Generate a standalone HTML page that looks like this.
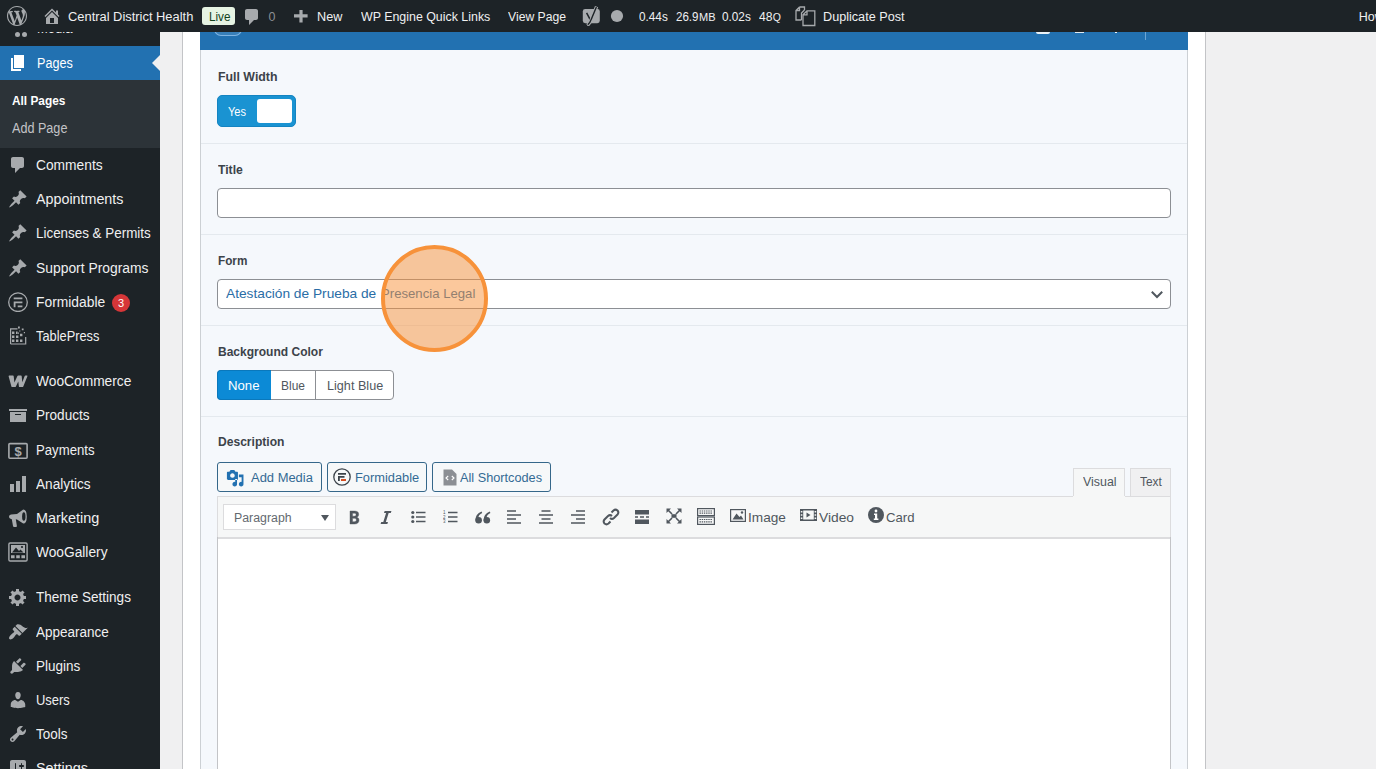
<!DOCTYPE html>
<html><head><meta charset="utf-8"><style>
html,body{margin:0;padding:0;width:1376px;height:769px;overflow:hidden;background:#f0f0f1;}
body{position:relative;font-family:"Liberation Sans",sans-serif;}
.r{position:absolute;}
.t{position:absolute;white-space:nowrap;line-height:20px;transform-origin:0 0;}
</style></head><body>
<div class="r" style="left:160px;top:32px;width:1216px;height:737px;background:#f0f0f1"></div>
<div class="r" style="left:182px;top:32px;width:1024px;height:737px;background:#fff;border-left:1px solid #c3c4c7;border-right:1px solid #c3c4c7;box-sizing:border-box"></div>
<div class="r" style="left:200px;top:32px;width:988px;height:737px;background:#f5f8fc;border-left:1px solid #ccd0d4;border-right:1px solid #ccd0d4;box-sizing:border-box"></div>
<div class="r" style="left:200px;top:32px;width:988px;height:18px;background:#2271b1"></div>
<div class="r" style="left:214px;top:22px;width:28px;height:14px;border:1.2px solid rgba(140,190,235,.85);border-radius:8px;background:rgba(255,255,255,.1);box-sizing:border-box"></div>
<div class="r" style="left:1036px;top:32px;width:14px;height:1.6000000000000014px;background:rgba(255,255,255,.9);border-radius:0 0 2px 2px"></div>
<div class="r" style="left:1075px;top:32px;width:8.5px;height:1.2000000000000028px;background:rgba(255,255,255,.85)"></div>
<div class="r" style="left:1115px;top:32px;width:2px;height:1.3999999999999986px;background:rgba(255,255,255,.9)"></div>
<div class="r" style="left:1145px;top:32px;width:1px;height:8px;background:rgba(160,200,235,.6)"></div>
<div class="r" style="left:201px;top:143px;width:986px;height:1px;background:#e4e9ee"></div>
<div class="r" style="left:201px;top:234px;width:986px;height:1px;background:#e4e9ee"></div>
<div class="r" style="left:201px;top:325px;width:986px;height:1px;background:#e4e9ee"></div>
<div class="r" style="left:201px;top:416px;width:986px;height:1px;background:#e4e9ee"></div>
<div class="r" style="left:0px;top:32px;width:160px;height:737px;background:#1d2327"></div>
<div class="r" style="left:0px;top:46px;width:160px;height:34px;background:#2271b1"></div>
<div class="r" style="left:0px;top:80px;width:160px;height:68px;background:#2c3338"></div>
<div class="r" style="left:152px;top:55px;width:0;height:0;border-top:8px solid transparent;border-bottom:8px solid transparent;border-right:8px solid #f0f0f1"></div>
<div class="r" style="left:0px;top:0px;width:1376px;height:32px;background:#1d2327"></div>
<svg class="r" style="left:7px;top:6px;" width="20" height="20" viewBox="0 0 20 20"><path fill-rule="evenodd" d="M20 10c0-5.51-4.49-10-10-10C4.48 0 0 4.49 0 10c0 5.52 4.48 10 10 10 5.51 0 10-4.48 10-10zM7.78 15.37L4.37 6.22c.55-.02 1.17-.08 1.17-.08.5-.06.44-1.13-.06-1.11 0 0-1.45.11-2.37.11-.18 0-.37 0-.58-.01C4.120 2.690 6.870 1.110 10 1.110c2.33 0 4.45.87 6.05 2.34-.68-.11-1.65.39-1.650 1.580 0 .74.45 1.36.9 2.1.35.61.55 1.36.55 2.46 0 1.49-1.4 5-1.4 5l-3.03-8.37c.54-.02.82-.17.82-.17.5-.05.44-1.25-.06-1.22 0 0-1.44.12-2.38.12-.87 0-2.33-.12-2.33-.12-.5-.03-.56 1.2-.06 1.22l.92.08 1.26 3.41zM17.41 10c.24-.64.74-1.870.43-4.250.7 1.290 1.050 2.710 1.050 4.250 0 3.29-1.73 6.24-4.4 7.78.97-2.59 1.94-5.2 2.92-7.78zM6.1 18.09C3.12 16.65 1.11 13.53 1.11 10c0-1.3.23-2.48.72-3.59C3.25 10.3 4.67 14.2 6.1 18.090zm4.03-6.63l2.58 6.98c-.86.29-1.76.45-2.71.45-.79 0-1.57-.11-2.29-.33.81-2.38 1.62-4.74 2.42-7.1z" fill="#a7aaad"/></svg>
<svg class="r" style="left:42px;top:6px;" width="20" height="20" viewBox="0 0 20 20"><path d="M16 8.5l1.53 1.53-1.06 1.06L10 4.62l-6.47 6.47-1.06-1.06L10 2.5l4 4v-2h2v4zm-6-2.46l6 5.99V18H4v-5.97zM12 17v-5H8v5h4z" fill="#a7aaad"/></svg>
<div class="t" style="left:68.00px;top:6.67px;font-size:12.5px;color:#f0f0f1;transform:scaleX(1.0308);">Central District Health</div>
<div class="r" style="left:202px;top:7px;width:33px;height:18px;background:#e6f3e3;border-radius:3px"></div>
<div class="t" style="left:208.50px;top:6.67px;font-size:12.5px;color:#12421c;transform:scaleX(0.9376);">Live</div>
<svg class="r" style="left:242px;top:7px;" width="20" height="20" viewBox="0 0 20 20"><path d="M5 2h9c1.1 0 2 .9 2 2v7c0 1.1-.9 2-2 2h-2l-5 5v-5H5c-1.1 0-2-.9-2-2V4c0-1.1.9-2 2-2z" fill="#a7aaad"/></svg>
<div class="t" style="left:268.40px;top:6.67px;font-size:12.5px;color:#8c8f94;transform:scaleX(1.0000);">0</div>
<svg class="r" style="left:293px;top:9px;" width="16" height="15" viewBox="0 0 16 15"><path d="M6.4 1 H9.6 V5.2 H14.6 V8.4 H9.6 V13.6 H6.4 V8.4 H1 V5.2 H6.4 Z" fill="#a7aaad"/></svg>
<div class="t" style="left:316.70px;top:6.67px;font-size:12.5px;color:#f0f0f1;transform:scaleX(1.0117);">New</div>
<div class="t" style="left:360.80px;top:6.67px;font-size:12.5px;color:#f0f0f1;transform:scaleX(0.9917);">WP Engine Quick Links</div>
<div class="t" style="left:507.90px;top:6.67px;font-size:12.5px;color:#f0f0f1;transform:scaleX(0.9759);">View Page</div>
<svg class="r" style="left:582px;top:6px;" width="18" height="20" viewBox="0 0 18 20"><rect x="0.8" y="3" width="17" height="14.2" rx="2.4" fill="#a7aaad"/><path d="M4.6 6.8 Q6.6 10.5 8.2 13.6" stroke="#1d2327" stroke-width="1.5" fill="none"/><path d="M14.6 0.6 L9.4 13.2 Q8 17.6 5.2 19.4" stroke="#a7aaad" stroke-width="3.4" fill="none"/><path d="M14.4 1 L9.2 13.4 Q8 17 5.8 18.8" stroke="#1d2327" stroke-width="1.4" fill="none"/></svg>
<svg class="r" style="left:610px;top:9px;" width="14" height="14" viewBox="0 0 14 14"><circle cx="7" cy="7" r="6.1" fill="#a7aaad"/></svg>
<div class="t" style="left:638.80px;top:6.67px;font-size:12.5px;color:#f0f0f1;transform:scaleX(0.9419);">0.44s</div>
<div class="t" style="left:675.50px;top:6.67px;font-size:12.5px;color:#f0f0f1;transform:scaleX(0.9249);">26.9</div>
<div class="t" style="left:698.50px;top:7.54px;font-size:10px;color:#f0f0f1;transform:scaleX(1.0999);">MB</div>
<div class="t" style="left:722.40px;top:6.67px;font-size:12.5px;color:#f0f0f1;transform:scaleX(0.9419);">0.02s</div>
<div class="t" style="left:758.90px;top:6.67px;font-size:12.5px;color:#f0f0f1;transform:scaleX(0.9710);">48</div>
<div class="t" style="left:772.80px;top:7.36px;font-size:10.5px;color:#f0f0f1;transform:scaleX(1.0000);">Q</div>
<svg class="r" style="left:795px;top:6px;" width="22" height="21" viewBox="0 0 22 21"><path d="M4.5 1 H9.5 V4 M4.5 1 L1 4.5 V14 H6.5 M1 4.5 H4.5 V1" fill="none" stroke="#a7aaad" stroke-width="1.3"/><path d="M12 4.8 H19.8 V19.5 H8 V8.8 Z M8 8.8 H12 V4.8" fill="none" stroke="#a7aaad" stroke-width="1.3"/><path d="M9.5 4 L6.5 7 V14" fill="none" stroke="#a7aaad" stroke-width="1.3"/></svg>
<div class="t" style="left:822.50px;top:6.67px;font-size:12.5px;color:#f0f0f1;transform:scaleX(1.0112);">Duplicate Post</div>
<div class="t" style="left:1358.80px;top:6.67px;font-size:12.5px;color:#f0f0f1;transform:scaleX(1.0000);">Howdy, Admin</div>
<div class="r" style="left:0;top:32px;width:160px;height:8px;overflow:hidden">
<svg class="r" style="left:8px;top:-14px;" width="20" height="20" viewBox="0 0 20 20"><circle cx="9.5" cy="16.5" r="2.5" fill="#a7aaad"/><circle cx="16.5" cy="16.5" r="2.5" fill="#a7aaad"/></svg>
</div>
<div class="r" style="left:36px;top:32px;width:60px;height:1.6px;overflow:hidden"><div class="t" style="left:0.5px;top:-14px;font-size:14px;color:#f0f0f1;transform:scaleX(0.93)">Media</div></div>
<svg class="r" style="left:8px;top:53px;" width="20" height="20" viewBox="0 0 20 20"><path d="M6 15V2h10v13H6zm-1 1h8v2H3V5h2v11z" fill="#fff"/></svg>
<div class="t" style="left:36.50px;top:53.15px;font-size:14px;color:#fff;transform:scaleX(0.8993);">Pages</div>
<div class="t" style="left:11.90px;top:90.97px;font-size:12.5px;color:#fff;transform:scaleX(0.9490);font-weight:bold;">All Pages</div>
<div class="t" style="left:12.00px;top:118.15px;font-size:14px;color:#c3c4c7;transform:scaleX(0.9009);">Add Page</div>
<div class="t" style="left:36.30px;top:155.35px;font-size:14px;color:#f0f0f1;transform:scaleX(0.9840);">Comments</div>
<div class="t" style="left:36.30px;top:189.35px;font-size:14px;color:#f0f0f1;transform:scaleX(1.0210);">Appointments</div>
<div class="t" style="left:36.30px;top:223.35px;font-size:14px;color:#f0f0f1;transform:scaleX(0.9573);">Licenses &amp; Permits</div>
<div class="t" style="left:36.30px;top:257.85px;font-size:14px;color:#f0f0f1;transform:scaleX(0.9902);">Support Programs</div>
<div class="t" style="left:36.30px;top:291.95px;font-size:14px;color:#f0f0f1;transform:scaleX(0.9882);">Formidable</div>
<div class="t" style="left:36.30px;top:325.95px;font-size:14px;color:#f0f0f1;transform:scaleX(0.9155);">TablePress</div>
<div class="t" style="left:36.30px;top:371.35px;font-size:14px;color:#f0f0f1;transform:scaleX(0.9836);">WooCommerce</div>
<div class="t" style="left:36.30px;top:405.45px;font-size:14px;color:#f0f0f1;transform:scaleX(0.9684);">Products</div>
<div class="t" style="left:36.30px;top:439.85px;font-size:14px;color:#f0f0f1;transform:scaleX(0.9398);">Payments</div>
<div class="t" style="left:36.30px;top:474.15px;font-size:14px;color:#f0f0f1;transform:scaleX(0.9746);">Analytics</div>
<div class="t" style="left:36.30px;top:508.45px;font-size:14px;color:#f0f0f1;transform:scaleX(1.0298);">Marketing</div>
<div class="t" style="left:36.30px;top:542.45px;font-size:14px;color:#f0f0f1;transform:scaleX(0.9811);">WooGallery</div>
<div class="t" style="left:36.30px;top:587.45px;font-size:14px;color:#f0f0f1;transform:scaleX(0.9679);">Theme Settings</div>
<div class="t" style="left:36.30px;top:621.85px;font-size:14px;color:#f0f0f1;transform:scaleX(0.9642);">Appearance</div>
<div class="t" style="left:36.30px;top:656.05px;font-size:14px;color:#f0f0f1;transform:scaleX(0.9626);">Plugins</div>
<div class="t" style="left:36.30px;top:690.05px;font-size:14px;color:#f0f0f1;transform:scaleX(0.9245);">Users</div>
<div class="t" style="left:36.30px;top:724.15px;font-size:14px;color:#f0f0f1;transform:scaleX(0.9608);">Tools</div>
<div class="t" style="left:36.30px;top:758.25px;font-size:14px;color:#f0f0f1;transform:scaleX(1.0280);">Settings</div>
<div class="r" style="left:112px;top:294px;width:18px;height:18px;border-radius:9px;background:#d63638"></div>
<div class="t" style="left:118.00px;top:293.19px;font-size:11px;color:#fff;transform:scaleX(1.0000);">3</div>
<svg class="r" style="left:8px;top:155.1px;" width="20" height="20" viewBox="0 0 20 20"><path d="M5 2h9c1.1 0 2 .9 2 2v7c0 1.1-.9 2-2 2h-2l-5 5v-5H5c-1.1 0-2-.9-2-2V4c0-1.1.9-2 2-2z" fill="#a7aaad"/></svg>
<svg class="r" style="left:8px;top:189.1px;" width="20" height="20" viewBox="0 0 20 20"><path d="M10.44 3.02l1.82-1.82 6.36 6.35-1.83 1.82c-1.05-.68-2.48-.57-3.41.36l-.75.75c-.92.93-1.04 2.35-.35 3.41l-1.83 1.82-2.41-2.41-2.8 2.79c-.42.42-3.38 2.71-3.8 2.29s1.86-3.39 2.28-3.81l2.79-2.79L4.1 9.36l1.83-1.82c1.05.69 2.48.57 3.4-.36l.75-.75c.93-.92 1.05-2.35.36-3.41z" fill="#a7aaad"/></svg>
<svg class="r" style="left:8px;top:223.1px;" width="20" height="20" viewBox="0 0 20 20"><path d="M10.44 3.02l1.82-1.82 6.36 6.35-1.83 1.82c-1.05-.68-2.48-.57-3.41.36l-.75.75c-.92.93-1.04 2.35-.35 3.41l-1.83 1.82-2.41-2.41-2.8 2.79c-.42.42-3.38 2.71-3.8 2.29s1.86-3.39 2.28-3.81l2.79-2.79L4.1 9.36l1.83-1.82c1.05.69 2.48.57 3.4-.36l.75-.75c.93-.92 1.05-2.35.36-3.41z" fill="#a7aaad"/></svg>
<svg class="r" style="left:8px;top:257.6px;" width="20" height="20" viewBox="0 0 20 20"><path d="M10.44 3.02l1.82-1.82 6.36 6.35-1.83 1.82c-1.05-.68-2.48-.57-3.41.36l-.75.75c-.92.93-1.04 2.35-.35 3.41l-1.83 1.82-2.41-2.41-2.8 2.79c-.42.42-3.38 2.71-3.8 2.29s1.86-3.39 2.28-3.81l2.79-2.79L4.1 9.36l1.83-1.82c1.05.69 2.48.57 3.4-.36l.75-.75c.93-.92 1.05-2.35.36-3.41z" fill="#a7aaad"/></svg>
<svg class="r" style="left:8px;top:291.7px;" width="20" height="20" viewBox="0 0 20 20"><circle cx="10" cy="10.2" r="9.3" fill="none" stroke="#a7aaad" stroke-width="1.3"/><path d="M5.7 5.5 H14.4 V7.3 H5.7 Z M5.7 9.5 H14.4 V11.3 H7.5 V15.3 H5.7 Z M9.7 13.4 H14.4 V15.2 H9.7 Z" fill="#a7aaad"/></svg>
<svg class="r" style="left:8px;top:325.7px;" width="20" height="20" viewBox="0 0 20 20"><path d="M2.6 18 V2.9 H9.5 M2.6 18 H17.7 V11" fill="none" stroke="#a7aaad" stroke-width="1.2"/><path d="M4 5.6h2.4v2.4h-2.4z M4 9.6h2.4v2.4h-2.4z M4 13.6h2.4v2.4h-2.4z M8 9.6h2.4v2.4h-2.4z M8 13.6h2.4v2.4h-2.4z M12 13.6h2.4v2.4h-2.4z M8 5.6h1.6v2.4h-1.6z M12 7.8h2.4v2.4h-2.4z" fill="#a7aaad"/><path d="M10 0.6h1.8v1.8h-1.8z M13.8 2.4h1.8v1.8h-1.8z M11.2 4.4h1.2v1.2h-1.2z M15.8 6h1.2v1.2h-1.2z M9.8 6.6h1.2v1.2h-1.2z" fill="#a7aaad"/></svg>
<svg class="r" style="left:8px;top:371.1px;" width="20" height="20" viewBox="0 0 20 20"><path d="M0.6 5.2 Q0.6 4.6 1.3 4.6 H5 Q5.6 4.6 5.7 5.3 L6.4 11.4 L9.3 5.2 Q9.6 4.6 10.2 4.6 H13 Q13.6 4.6 13.7 5.3 L14.3 11.2 L16.6 5.2 Q16.9 4.6 17.5 4.6 H19 Q19.7 4.6 19.4 5.3 L15.3 15.4 Q15 16 14.4 16 H11.6 Q11 16 10.9 15.4 L10.3 10.6 L7.9 15.4 Q7.6 16 7 16 H4.2 Q3.6 16 3.4 15.4 Z" fill="#a7aaad"/></svg>
<svg class="r" style="left:8px;top:405.2px;" width="20" height="20" viewBox="0 0 20 20"><path d="M19 4v2H1V4h18zM2 7h16v10H2V7zm11 3V9H7v1h6z" fill="#a7aaad"/></svg>
<svg class="r" style="left:8px;top:439.6px;" width="20" height="20" viewBox="0 0 20 20"><rect x="0.9" y="3.6" width="18.2" height="14.6" rx="1" fill="none" stroke="#a7aaad" stroke-width="1.6"/><text x="10" y="15.6" font-family="Liberation Sans" font-weight="bold" font-size="13" text-anchor="middle" fill="#a7aaad">$</text></svg>
<svg class="r" style="left:8px;top:473.9px;" width="20" height="20" viewBox="0 0 20 20"><path d="M18 18V2h-4v16h4zm-6 0V7H8v11h4zm-6 0v-8H2v8h4z" fill="#a7aaad"/></svg>
<svg class="r" style="left:8px;top:508.2px;" width="20" height="20" viewBox="0 0 20 20"><path d="M1 8.6 Q1 6.6 3 6.4 L9 6 L15.2 1.4 Q18.8 1.4 18.8 8.4 Q18.8 15.6 15.2 15.6 L9 11.4 L7.8 11.3 L8.9 18 Q9 19 8 19 H6 Q5.2 19 5 18 L3.8 11.2 Q1 11 1 8.6 Z" fill="#a7aaad"/><ellipse cx="15.8" cy="8.5" rx="1.7" ry="4.3" fill="#1d2327"/></svg>
<svg class="r" style="left:8px;top:542.2px;" width="20" height="20" viewBox="0 0 20 20"><rect x="0.9" y="1" width="18.2" height="18" rx="1.2" fill="none" stroke="#a7aaad" stroke-width="1.4"/><path d="M3 3 H17 V11 H3 Z" fill="#a7aaad"/><path d="M4 10.5 L8 5.5 L11 9 L12.5 7.5 L15.5 10.5 Z" fill="#1d2327"/><circle cx="14" cy="5" r="1.1" fill="#1d2327"/><path d="M3 13.2h3.6v3h-3.6z M8.2 13.2h3.6v3h-3.6z M13.4 13.2h3.6v3h-3.6z" fill="#a7aaad"/></svg>
<svg class="r" style="left:8px;top:587.2px;" width="20" height="20" viewBox="0 0 20 20"><path d="M18 12h-2.18c-.17.7-.44 1.35-.81 1.93l1.54 1.54-2.1 2.1-1.54-1.54c-.58.36-1.23.63-1.91.79V19H8v-2.18c-.68-.16-1.33-.43-1.91-.79l-1.54 1.54-2.12-2.12 1.54-1.54c-.36-.58-.63-1.23-.79-1.91H1V9.03h2.17c.16-.7.44-1.35.8-1.94L2.43 5.55l2.1-2.1 1.54 1.54c.58-.37 1.24-.64 1.93-.81V2h3v2.18c.68.16 1.33.43 1.910.79l1.54-1.54 2.12 2.12-1.54 1.54c.36.59.64 1.24.8 1.94H18V12zm-8.5 1.5c1.66 0 3-1.34 3-3s-1.34-3-3-3-3 1.34-3 3 1.34 3 3 3z" fill="#a7aaad"/></svg>
<svg class="r" style="left:8px;top:621.6px;" width="20" height="20" viewBox="0 0 20 20"><path d="M14.48 11.06L7.41 3.99l1.5-1.5c.5-.56 2.3-.47 3.51.32 1.21.8 1.43 1.28 2.91 2.1 1.18.64 2.45 1.26 4.45.85zm-.71.71L6.7 4.7 4.93 6.47c-.39.39-.39 1.02 0 1.41l1.06 1.06c.39.39.39 1.03 0 1.42-.6.6-1.43 1.11-2.21 1.69-.35.26-.7.53-1.01.84C1.43 14.23.4 16.08 1.4 17.07c.99 1 2.84-.03 4.18-1.36.31-.31.58-.66.85-1.020.57-.78 1.08-1.61 1.69-2.21.39-.39 1.02-.39 1.41 0l1.06 1.06c.39.39 1.02.39 1.41 0z" fill="#a7aaad"/></svg>
<svg class="r" style="left:8px;top:655.8px;" width="20" height="20" viewBox="0 0 20 20"><path d="M13.11 4.36L9.87 7.6 8 5.73l3.24-3.24c.35-.34 1.05-.2 1.56.32.52.51.66 1.21.31 1.55zm-8 1.77l.91-1.12 9.01 9.01-1.19.84c-.71.71-2.63 1.16-3.82 1.16H6.14L4.9 17.26c-.59.59-1.54.59-2.12 0-.59-.58-.59-1.53 0-2.12l1.24-1.24v-3.88c0-1.13.4-3.19 1.09-3.89zm7.26 3.97l3.24-3.24c.34-.35 1.04-.21 1.55.31.52.51.66 1.21.31 1.55l-3.24 3.25z" fill="#a7aaad"/></svg>
<svg class="r" style="left:8px;top:689.8px;" width="20" height="20" viewBox="0 0 20 20"><path d="M10 9.25c-2.27 0-2.73-3.44-2.73-3.44C7 4.02 7.82 2 9.97 2c2.16 0 2.98 2.02 2.71 3.81 0 0-.41 3.44-2.68 3.44zm0 2.57L12.72 10c2.39 0 4.52 2.33 4.52 4.53v2.49s-3.65 1.13-7.24 1.13c-3.65 0-7.24-1.13-7.24-1.13v-2.49c0-2.25 1.94-4.48 4.47-4.48z" fill="#a7aaad"/></svg>
<svg class="r" style="left:8px;top:723.9px;" width="20" height="20" viewBox="0 0 20 20"><path d="M16.68 9.77c-1.34 1.34-3.3 1.67-4.95.99l-5.41 6.52c-.99.99-2.59.99-3.58 0s-.99-2.59 0-3.57l6.52-5.42c-.68-1.65-.35-3.61.99-4.95 1.28-1.28 3.12-1.62 4.72-1.06l-2.89 2.89 2.82 2.82 2.86-2.87c.53 1.58.18 3.39-1.08 4.65zM3.81 16.21c.4.39 1.04.39 1.43 0 .4-.4.4-1.04 0-1.43-.39-.4-1.03-.4-1.43 0-.39.39-.39 1.03 0 1.43z" fill="#a7aaad"/></svg>
<svg class="r" style="left:8px;top:758.0px;" width="20" height="20" viewBox="0 0 20 20"><path d="M18 16V4c0-1.1-.9-2-2-2H4c-1.1 0-2 .9-2 2v12c0 1.1.9 2 2 2h12c1.1 0 2-.9 2-2zM8 11h1c.55 0 1 .45 1 1s-.45 1-1 1H8v1.5c0 .28-.22.5-.5.5s-.5-.22-.5-.5V13H6c-.55 0-1-.45-1-1s.45-1 1-1h1V5.5c0-.28.22-.5.5-.5s.5.22.5.5V11zm5-2h-1c-.55 0-1-.45-1-1s.45-1 1-1h1V5.5c0-.28.22-.5.5-.5s.5.22.5.5V7h1c.55 0 1 .45 1 1s-.45 1-1 1h-1v5.5c0 .28-.22.5-.5.5s-.5-.22-.5-.5V9z" fill="#a7aaad"/></svg>
<div class="t" style="left:217.70px;top:66.54px;font-size:12px;color:#3c434a;transform:scaleX(1.0280);font-weight:bold;">Full Width</div>
<div class="r" style="left:217px;top:95px;width:79px;height:32px;background:#1a93d2;border:1px solid #1484c2;border-radius:5px;box-sizing:border-box"></div>
<div class="r" style="left:257px;top:99px;width:35px;height:24px;background:#fff;border-radius:3px"></div>
<div class="t" style="left:228.20px;top:101.64px;font-size:12px;color:#fff;transform:scaleX(0.9195);">Yes</div>
<div class="t" style="left:217.70px;top:159.84px;font-size:12px;color:#3c434a;transform:scaleX(1.0142);font-weight:bold;">Title</div>
<div class="r" style="left:217px;top:188px;width:954px;height:30px;background:#fff;border:1px solid #8c8f94;border-radius:4px;box-sizing:border-box"></div>
<div class="t" style="left:217.80px;top:250.64px;font-size:12px;color:#3c434a;transform:scaleX(0.9799);font-weight:bold;">Form</div>
<div class="r" style="left:217px;top:279px;width:954px;height:30px;background:#fff;border:1px solid #8c8f94;border-radius:4px;box-sizing:border-box"></div>
<div class="t" style="left:226.30px;top:284.00px;font-size:13px;color:#2a6da6;transform:scaleX(1.0550);">Atestación de Prueba de</div>
<div class="t" style="left:380.60px;top:284.00px;font-size:13px;color:#2a6da6;transform:scaleX(1.0115);">Presencia Legal</div>
<svg class="r" style="left:1150px;top:290px;" width="14" height="9" viewBox="0 0 14 9"><path d="M1.8 1.8 L7 7 L12.2 1.8" fill="none" stroke="#50575e" stroke-width="2"/></svg>
<div class="t" style="left:217.80px;top:341.94px;font-size:12px;color:#3c434a;transform:scaleX(1.0021);font-weight:bold;">Background Color</div>
<div class="r" style="left:217px;top:370px;width:177px;height:30px;background:#fff;border:1px solid #8c8f94;border-radius:4px;box-sizing:border-box"></div>
<div class="r" style="left:217px;top:370px;width:54px;height:30px;background:#0c8ad6;border:1px solid #0a78bc;border-right:none;border-radius:4px 0 0 4px;box-sizing:border-box"></div>
<div class="r" style="left:315px;top:371px;width:1px;height:28px;background:#8c8f94"></div>
<div class="t" style="left:227.80px;top:375.84px;font-size:12px;color:#fff;transform:scaleX(1.0980);">None</div>
<div class="t" style="left:281.30px;top:375.84px;font-size:12px;color:#50575e;transform:scaleX(0.9992);">Blue</div>
<div class="t" style="left:326.80px;top:375.84px;font-size:12px;color:#50575e;transform:scaleX(1.0529);">Light Blue</div>
<div class="t" style="left:217.70px;top:432.44px;font-size:12px;color:#3c434a;transform:scaleX(1.0058);font-weight:bold;">Description</div>
<div class="r" style="left:217px;top:462px;width:105px;height:30px;background:#f6f8f9;border:1px solid #35678a;border-radius:3px;box-sizing:border-box"></div>
<div class="r" style="left:327px;top:462px;width:100px;height:30px;background:#f6f8f9;border:1px solid #35678a;border-radius:3px;box-sizing:border-box"></div>
<div class="r" style="left:432px;top:462px;width:119px;height:30px;background:#f6f8f9;border:1px solid #35678a;border-radius:3px;box-sizing:border-box"></div>
<div class="t" style="left:251.40px;top:467.57px;font-size:12.5px;color:#336a94;transform:scaleX(1.0358);">Add Media</div>
<div class="t" style="left:354.90px;top:467.57px;font-size:12.5px;color:#336a94;transform:scaleX(1.0268);">Formidable</div>
<div class="t" style="left:460.40px;top:467.57px;font-size:12.5px;color:#336a94;transform:scaleX(1.0174);">All Shortcodes</div>
<svg class="r" style="left:226px;top:468.6px;" width="18.4" height="18.4" viewBox="0 0 20 20"><path d="M13 11V4c0-.55-.45-1-1-1h-1.67L9 1H5L3.67 3H2c-.55 0-1 .45-1 1v7c0 .55.45 1 1 1h10c.55 0 1-.45 1-1zM7 4.5c1.38 0 2.5 1.12 2.5 2.5S8.38 9.5 7 9.5 4.5 8.38 4.5 7 5.62 4.5 7 4.5zM14 6h5v10.5c0 1.38-1.12 2.5-2.5 2.5S14 17.88 14 16.5s1.12-2.5 2.5-2.5c.17 0 .34.02.5.05V9h-3V6zm-4 8.050V11h2v5.5c0 1.38-1.12 2.5-2.5 2.5S7 17.88 7 16.5 8.12 14 9.5 14c.17 0 .34.02.5.05z" fill="#2271b1"/></svg>
<svg class="r" style="left:333px;top:468px;" width="18" height="18" viewBox="0 0 18 18"><circle cx="9" cy="9" r="8.2" fill="none" stroke="#3c434a" stroke-width="1.3"/><path d="M5 5 H13 V6.8 H5 Z M5 8 H11.5 V9.8 H6.8 V13 H5 Z" fill="#3c434a"/><rect x="8" y="11" width="5" height="2" fill="#d54e21"/></svg>
<svg class="r" style="left:443px;top:469px;" width="14" height="17" viewBox="0 0 14 17"><path d="M0.5 0.5 H9 L13.5 5 V16.5 H0.5 Z" fill="#8c8f94"/><path d="M5.2 7 L3 9 L5.2 11 M8.8 7 L11 9 L8.8 11" fill="none" stroke="#fff" stroke-width="1.1"/></svg>
<div class="r" style="left:1073px;top:468px;width:52px;height:29px;background:#f6f7f7;border:1px solid #dcdcde;border-bottom:none;box-sizing:border-box"></div>
<div class="r" style="left:1130px;top:468px;width:41px;height:29px;background:#f0f0f1;border:1px solid #dcdcde;border-bottom:none;box-sizing:border-box"></div>
<div class="t" style="left:1082.80px;top:471.67px;font-size:12.5px;color:#50575e;transform:scaleX(0.9935);">Visual</div>
<div class="t" style="left:1140.00px;top:471.67px;font-size:12.5px;color:#50575e;transform:scaleX(0.9510);">Text</div>
<div class="r" style="left:217px;top:496px;width:954px;height:284px;background:#fff;border:1px solid #c3c4c7;box-sizing:border-box"></div>
<div class="r" style="left:217px;top:496px;width:954px;height:41px;border:1px solid #dcdcde;border-bottom:none;box-sizing:border-box"></div>
<div class="r" style="left:218px;top:497px;width:952px;height:40px;background:#f6f7f7"></div>
<div class="r" style="left:218px;top:537px;width:952px;height:2px;background:#dcdcde"></div>
<div class="r" style="left:1073px;top:496px;width:52px;height:1px;background:#f6f7f7"></div>
<div class="r" style="left:223px;top:504px;width:113px;height:26px;background:#fff;border:1px solid #dcdcde;box-sizing:border-box"></div>
<div class="t" style="left:233.50px;top:508.24px;font-size:12px;color:#646970;transform:scaleX(1.0278);">Paragraph</div>
<svg class="r" style="left:321px;top:515px;" width="8" height="6" viewBox="0 0 8 6"><path d="M0 0 H8 L4 6 Z" fill="#50575e"/></svg>
<svg class="r" style="left:343.5px;top:507.2px;" width="20" height="20" viewBox="0 0 20 20"><path d="M6 4v13h4.54c1.37 0 2.46-.33 3.26-1 .8-.66 1.2-1.58 1.2-2.77 0-.84-.17-1.51-.51-2.01s-.9-.85-1.67-1.03v-.09c.57-.1 1.02-.4 1.36-.9s.51-1.13.51-1.91c0-1.14-.39-1.98-1.17-2.5C12.75 4.26 11.5 4 9.78 4H6zm2.57 5.15V6.26h1.36c.73 0 1.27.11 1.61.32.34.22.51.58.51 1.07 0 .54-.16.92-.47 1.15s-.82.35-1.51.35h-1.5zm0 2.19h1.6c1.44 0 2.16.53 2.16 1.61 0 .6-.17 1.05-.51 1.34s-.86.43-1.57.43H8.57v-3.38z" fill="#50575e" stroke="#50575e" stroke-width="0.4"/></svg>
<svg class="r" style="left:376.4px;top:507px;" width="20" height="20" viewBox="0 0 20 20"><path d="M14.78 6h-2.13l-2.8 9h2.12l-.62 2H4.6l.62-2h2.07l2.8-9H8l.65-2h6.8z" fill="#50575e"/></svg>
<svg class="r" style="left:411px;top:510px;" width="15" height="14" viewBox="0 0 15 14"><circle cx="1.8" cy="2.5" r="1.6" fill="#50575e"/><circle cx="1.8" cy="7" r="1.6" fill="#50575e"/><circle cx="1.8" cy="11.5" r="1.6" fill="#50575e"/><path d="M5 2.5 H14.5 M5 7 H14.5 M5 11.5 H14.5" stroke="#50575e" stroke-width="1.6"/></svg>
<svg class="r" style="left:443px;top:510px;" width="15" height="14" viewBox="0 0 15 14"><text x="0" y="4" font-size="4.5" font-family="Liberation Sans" fill="#50575e">1</text><text x="0" y="8.6" font-size="4.5" font-family="Liberation Sans" fill="#50575e">2</text><text x="0" y="13.2" font-size="4.5" font-family="Liberation Sans" fill="#50575e">3</text><path d="M5 2.5 H14.5 M5 7 H14.5 M5 11.5 H14.5" stroke="#50575e" stroke-width="1.6"/></svg>
<svg class="r" style="left:474.5px;top:510.5px;" width="16" height="13" viewBox="0 0 16 13"><circle cx="3.6" cy="9.2" r="3.3" fill="#50575e"/><path d="M0.4 9.4 Q0.2 3.2 6.6 0.6 L7.2 2 Q3.6 3.8 3.4 6.6 Z" fill="#50575e"/><circle cx="11.8" cy="9.2" r="3.3" fill="#50575e"/><path d="M8.6 9.4 Q8.4 3.2 14.8 0.6 L15.4 2 Q11.8 3.8 11.6 6.6 Z" fill="#50575e"/></svg>
<svg class="r" style="left:507px;top:510px;" width="14" height="14" viewBox="0 0 14 14"><path d="M0 1 H9 M0 5 H14 M0 9 H9 M0 13 H14" stroke="#50575e" stroke-width="1.7"/></svg>
<svg class="r" style="left:539px;top:510px;" width="14" height="14" viewBox="0 0 14 14"><path d="M2.5 1 H11.5 M0 5 H14 M2.5 9 H11.5 M0 13 H14" stroke="#50575e" stroke-width="1.7"/></svg>
<svg class="r" style="left:571px;top:510px;" width="14" height="14" viewBox="0 0 14 14"><path d="M5 1 H14 M0 5 H14 M5 9 H14 M0 13 H14" stroke="#50575e" stroke-width="1.7"/></svg>
<svg class="r" style="left:602px;top:508px;" width="18" height="18" viewBox="0 0 18 18"><path d="M9.5 4.5 L11.5 2.5 Q13.5 0.8 15.5 2.5 Q17.2 4.5 15.5 6.5 L12 10 Q10 11.8 8 10 M8.5 13.5 L6.5 15.5 Q4.5 17.2 2.5 15.5 Q0.8 13.5 2.5 11.5 L6 8 Q8 6.2 10 8" fill="none" stroke="#50575e" stroke-width="2"/></svg>
<svg class="r" style="left:635px;top:510px;" width="14" height="14" viewBox="0 0 14 14"><rect x="0" y="0" width="14" height="4.5" fill="#50575e"/><rect x="0" y="9.5" width="14" height="4.5" fill="#50575e"/><path d="M0 7 H3 M5 7 H9 M11 7 H14" stroke="#50575e" stroke-width="1.4"/></svg>
<svg class="r" style="left:666px;top:508px;" width="16" height="16" viewBox="0 0 16 16"><path d="M1.5 1.5 L6 6 M14.5 1.5 L10 6 M1.5 14.5 L6 10 M14.5 14.5 L10 10" stroke="#50575e" stroke-width="1.6"/><path d="M0.5 0.5 H5 L0.5 5 Z M15.5 0.5 H11 L15.5 5 Z M0.5 15.5 H5 L0.5 11 Z M15.5 15.5 H11 L15.5 11 Z" fill="#50575e"/><rect x="5.5" y="6.2" width="5" height="3.6" fill="#50575e"/></svg>
<svg class="r" style="left:697px;top:508px;" width="18" height="17" viewBox="0 0 18 17"><rect x="0.6" y="0.6" width="16.8" height="7" fill="none" stroke="#50575e" stroke-width="1.2"/><rect x="0.6" y="9" width="16.8" height="7.4" fill="none" stroke="#50575e" stroke-width="1.2"/><path d="M2.5 3 h13 M2.5 5.2 h13 M2.5 11.5 h13 M2.5 13.8 h13" stroke="#50575e" stroke-width="1.2" stroke-dasharray="1.4 0.8"/></svg>
<svg class="r" style="left:730px;top:509px;" width="16" height="13" viewBox="0 0 16 13"><rect x="0.6" y="0.6" width="14.8" height="11.8" fill="none" stroke="#50575e" stroke-width="1.2"/><path d="M2.5 10.5 L6.5 4.5 L9.5 8 L11 6.5 L13.5 10.5 Z" fill="#50575e"/><circle cx="12" cy="3.5" r="1.2" fill="#50575e"/></svg>
<div class="t" style="left:748.30px;top:507.50px;font-size:13px;color:#50575e;transform:scaleX(1.0490);">Image</div>
<svg class="r" style="left:800px;top:509px;" width="17" height="12" viewBox="0 0 17 12"><rect x="0" y="0" width="17" height="12" fill="#50575e"/><rect x="3.2" y="1.5" width="10.6" height="9" fill="#f6f7f7"/><path d="M0.8 2h1.6v1.6h-1.6z M0.8 5.2h1.6v1.6h-1.6z M0.8 8.4h1.6v1.6h-1.6z M14.6 2h1.6v1.6h-1.6z M14.6 5.2h1.6v1.6h-1.6z M14.6 8.4h1.6v1.6h-1.6z" fill="#f6f7f7"/><path d="M6.5 3.5 L10.5 6 L6.5 8.5 Z" fill="#50575e"/></svg>
<div class="t" style="left:819.00px;top:507.50px;font-size:13px;color:#50575e;transform:scaleX(1.0602);">Video</div>
<svg class="r" style="left:868px;top:507px;" width="16" height="16" viewBox="0 0 16 16"><circle cx="8" cy="8" r="8" fill="#50575e"/><circle cx="8" cy="4" r="1.4" fill="#fff"/><path d="M6 6.6 H9.2 V11.6 H10.4 V13 H5.8 V11.6 H7 V8 H6 Z" fill="#fff"/></svg>
<div class="t" style="left:886.40px;top:507.50px;font-size:13px;color:#50575e;transform:scaleX(1.0115);">Card</div>
<div class="r" style="left:381px;top:245px;width:107px;height:107px;border-radius:50%;border:4.5px solid #f7923a;background:rgba(247,146,58,.5);box-sizing:border-box"></div>
</body></html>
